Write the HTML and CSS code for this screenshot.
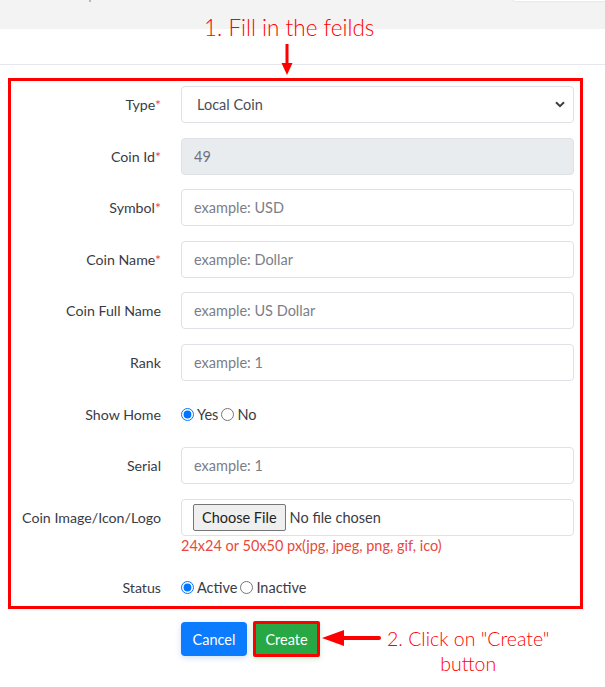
FILE: index.html
```html
<!DOCTYPE html>
<html>
<head>
<meta charset="utf-8">
<link rel="stylesheet" href="styles.css">
</head>
<body>
<div class="topbar">
  <span class="tick"></span>
  <span class="topcard"></span>
</div>
<div class="cardhead"></div>

<div class="note note-top">1. Fill in the feilds</div>
<svg class="arrow-down" width="14" height="32" viewBox="0 0 14 32">
  <rect x="5.5" y="0" width="3" height="22" fill="#ff0000"/>
  <polygon points="1.5,19 12.5,19 7,31" fill="#ff0000"/>
</svg>

<form class="formbox">
  <div class="frow">
    <label class="flabel">Type<span class="req">*</span></label>
    <div class="selwrap">
      <select class="fcontrol fselect"><option>Local Coin</option></select>
      <svg class="chev" width="10" height="7" viewBox="0 0 10 7"><path d="M1 1.2 L5 5.2 L9 1.2" fill="none" stroke="#3b3f46" stroke-width="2"/></svg>
    </div>
  </div>
  <div class="frow">
    <label class="flabel">Coin Id<span class="req">*</span></label>
    <input class="fcontrol" value="49" disabled>
  </div>
  <div class="frow">
    <label class="flabel">Symbol<span class="req">*</span></label>
    <input class="fcontrol" placeholder="example: USD">
  </div>
  <div class="frow">
    <label class="flabel">Coin Name<span class="req">*</span></label>
    <input class="fcontrol" placeholder="example: Dollar">
  </div>
  <div class="frow">
    <label class="flabel">Coin Full Name</label>
    <input class="fcontrol" placeholder="example: US Dollar">
  </div>
  <div class="frow">
    <label class="flabel">Rank</label>
    <input class="fcontrol" placeholder="example: 1">
  </div>
  <div class="frow">
    <label class="flabel">Show Home</label>
    <div class="radios">
      <label class="ropt"><input type="radio" name="home" checked>Yes</label>
      <label class="ropt"><input type="radio" name="home">No</label>
    </div>
  </div>
  <div class="frow">
    <label class="flabel">Serial</label>
    <input class="fcontrol" placeholder="example: 1">
  </div>
  <div class="frow frow-file">
    <label class="flabel">Coin Image/Icon/Logo</label>
    <div class="filecol">
      <div class="fcontrol filebox">
        <span class="filebtn">Choose File</span><span class="filename">No file chosen</span>
      </div>
      <div class="help">24x24 or 50x50 px(jpg, jpeg, png, gif, ico)</div>
    </div>
  </div>
  <div class="frow">
    <label class="flabel">Status</label>
    <div class="radios">
      <label class="ropt"><input type="radio" name="status" checked>Active</label>
      <label class="ropt"><input type="radio" name="status">Inactive</label>
    </div>
  </div>
</form>

<div class="actions">
  <button class="btn btn-cancel" type="button">Cancel</button>
  <button class="btn btn-create" type="button">Create</button>
  <svg class="arrow-left" width="60" height="18" viewBox="0 0 60 18">
    <polygon points="0,9 22,1 22,17" fill="#ff0000"/>
    <rect x="20" y="7" width="39" height="4" rx="2" fill="#ff0000"/>
  </svg>
  <div class="note note-bottom">2. Click on "Create"<br>button</div>
</div>
</body>
</html>
```
FILE: styles.css
```css
* { box-sizing: border-box; }
body {
  margin: 0;
  background: #fff;
  font-family: "Lato", "Noto Sans", sans-serif;
  font-size: 14px;
  color: #3a3b45;
  position: relative;
  width: 605px;
  height: 687px;
  overflow: hidden;
}
.topbar {
  height: 29px;
  background: #f3f3f3;
  position: relative;
}
.tick {
  position: absolute;
  left: 89px; top: 0;
  width: 2px; height: 2px;
  background: #b8b8b8;
}
.topcard {
  position: absolute;
  left: 513px; top: -4px;
  width: 100px; height: 5px;
  background: #fff;
  border-radius: 3px;
  box-shadow: 0 0 2px rgba(0,0,0,0.15);
}
.cardhead {
  height: 36px;
  border-bottom: 1px solid #e6e8ee;
}
.note {
  position: absolute;
  color: #ff0000;
  font-family: "Lato", "Open Sans", sans-serif;
  font-weight: 300;
  line-height: 1.2;
  white-space: nowrap;
}
.note-top {
  left: 204px;
  top: 14px;
  font-size: 22.5px;
}
.arrow-down {
  position: absolute;
  left: 280px;
  top: 44px;
}
.formbox {
  margin: 13px 22px 0 8px;
  border: 3px solid #ff0000;
  padding: 5px 6px 0 0;
  display: flex;
  flex-direction: column;
  gap: 14.6px;
  height: 531px;
}
.frow {
  display: grid;
  grid-template-columns: 1fr 393px;
  align-items: center;
  min-height: 37px;
}
.frow-file { align-items: start; }
.frow-file .flabel { line-height: 37px; }
.flabel {
  text-align: right;
  padding-right: 20px;
  color: #3a3b45;
  font-size: 14.2px;
}
.req { color: #e74a3b; }
.fcontrol {
  display: block;
  width: 100%;
  height: 37px;
  padding: 0 12px;
  border: 1px solid #dfe1e6;
  border-radius: 4px;
  background: #fff;
  font-family: inherit;
  font-size: 14.5px;
  color: #6e707e;
}
.fcontrol::placeholder { color: #7b7e88; }
.fcontrol:disabled { background: #e9ecef; color: #6e707e; }
.selwrap { position: relative; }
.fselect {
  appearance: none;
  -webkit-appearance: none;
  padding-left: 15px;
  color: #4b4e57;
}
.chev {
  position: absolute;
  right: 9px;
  top: 15px;
}
.radios {
  display: flex;
  align-items: center;
  color: #3a3b45;
  font-size: 14.5px;
}
.ropt {
  display: flex;
  align-items: center;
  margin-right: 3px;
}
.ropt input {
  margin: 0 3px 0 0;
  width: 13px; height: 13px;
}
.filebox {
  display: flex;
  align-items: center;
  padding-left: 11px;
  color: #3a3b45;
}
.filebtn {
  display: inline-flex;
  align-items: center;
  height: 27px;
  padding: 0 8px;
  border: 1px solid #767676;
  border-radius: 2px;
  background: #efefef;
  color: #222;
  margin-right: 4px;
}
.filename { color: #3a3b45; }
.help {
  color: #e74a3b;
  font-size: 14.5px;
  line-height: 20px;
  margin-top: 0;
}
.actions {
  position: relative;
  display: flex;
  align-items: center;
  padding-left: 181px;
  margin-top: 12px;
  gap: 6px;
}
.btn {
  height: 34px;
  padding: 0;
  border: none;
  border-radius: 4px;
  font-family: inherit;
  font-size: 14.5px;
  color: #fff;
  box-shadow: 0 2px 6px rgba(0,80,200,0.18);
}
.btn-cancel {
  background: #0b7bff;
  width: 66px;
}
.btn-create {
  background: #28a745;
  border: 3px solid #ff0000;
  border-radius: 2px;
  width: 67px;
  height: 36px;
  box-shadow: 0 2px 6px rgba(40,167,69,0.2);
}
.arrow-left {
  position: absolute;
  left: 322px;
  top: 8px;
}
.note-bottom {
  left: 387px;
  top: 5px;
  font-size: 19.5px;
  text-align: center;
  line-height: 25px;
}
```
